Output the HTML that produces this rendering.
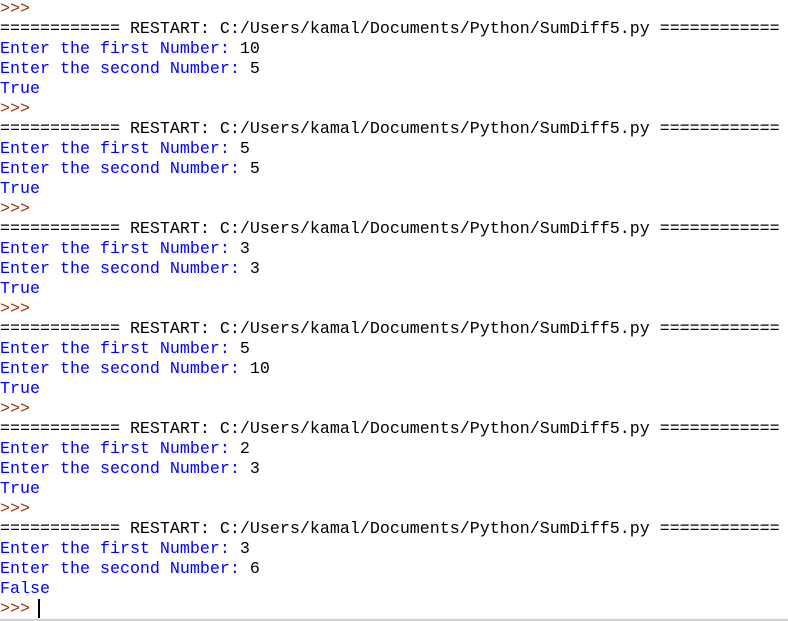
<!DOCTYPE html>
<html><head><style>
html,body{margin:0;padding:0;background:#fff;width:788px;height:621px;overflow:hidden;position:relative}
pre{margin:0;position:absolute;left:0;top:0px;font-family:"Liberation Mono",monospace;font-size:16.67px;line-height:20px;color:#000}
.p{color:#a0300a}.b{color:#0000ff}
.bar{position:absolute;left:0;top:619px;width:788px;height:2px;background:#d0d0d0}
.cur{position:absolute;left:38px;top:599px;width:2px;height:19px;background:#000}
</style></head><body>
<pre><span class="p">&gt;&gt;&gt;</span>
============ RESTART: C:/Users/kamal/Documents/Python/SumDiff5.py ============
<span class="b">Enter the first Number: </span>10
<span class="b">Enter the second Number: </span>5
<span class="b">True</span>
<span class="p">&gt;&gt;&gt;</span>
============ RESTART: C:/Users/kamal/Documents/Python/SumDiff5.py ============
<span class="b">Enter the first Number: </span>5
<span class="b">Enter the second Number: </span>5
<span class="b">True</span>
<span class="p">&gt;&gt;&gt;</span>
============ RESTART: C:/Users/kamal/Documents/Python/SumDiff5.py ============
<span class="b">Enter the first Number: </span>3
<span class="b">Enter the second Number: </span>3
<span class="b">True</span>
<span class="p">&gt;&gt;&gt;</span>
============ RESTART: C:/Users/kamal/Documents/Python/SumDiff5.py ============
<span class="b">Enter the first Number: </span>5
<span class="b">Enter the second Number: </span>10
<span class="b">True</span>
<span class="p">&gt;&gt;&gt;</span>
============ RESTART: C:/Users/kamal/Documents/Python/SumDiff5.py ============
<span class="b">Enter the first Number: </span>2
<span class="b">Enter the second Number: </span>3
<span class="b">True</span>
<span class="p">&gt;&gt;&gt;</span>
============ RESTART: C:/Users/kamal/Documents/Python/SumDiff5.py ============
<span class="b">Enter the first Number: </span>3
<span class="b">Enter the second Number: </span>6
<span class="b">False</span>
<span class="p">&gt;&gt;&gt;</span> </pre>
<div class="cur"></div>
<div class="bar"></div>
</body></html>
